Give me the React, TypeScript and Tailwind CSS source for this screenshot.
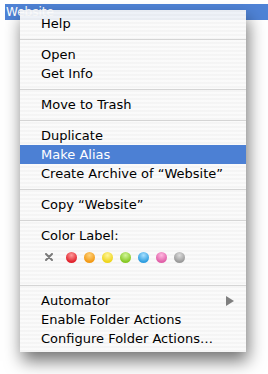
const dots = [
  'bg-[radial-gradient(circle_at_50%_30%,#ff9a9a,#e0222c_70%)]',
  'bg-[radial-gradient(circle_at_50%_30%,#ffd27a,#f29a16_70%)]',
  'bg-[radial-gradient(circle_at_50%_30%,#fff59a,#eed51c_70%)]',
  'bg-[radial-gradient(circle_at_50%_30%,#d2f59a,#86c824_70%)]',
  'bg-[radial-gradient(circle_at_50%_30%,#a8e0ff,#2f9ee0_70%)]',
  'bg-[radial-gradient(circle_at_50%_30%,#ffb8e0,#e060a8_70%)]',
  'bg-[radial-gradient(circle_at_50%_30%,#dcdcdc,#9a9a9a_70%)]',
];

function Item({ label, active, arrow }: { label: string; active?: boolean; arrow?: boolean }) {
  return (
    <div
      className={`flex h-[19px] items-center justify-between pl-[21px] pr-[12px] ${
        active ? 'bg-[#4c80d4] text-white' : 'text-black'
      }`}
    >
      <span>{label}</span>
      {arrow && (
        <svg width="8" height="10" viewBox="0 0 8 10">
          <polygon points="0,0 8,5 0,10" fill="#7f7f7f" />
        </svg>
      )}
    </div>
  );
}

function Sep() {
  return (
    <div className="flex h-[12px] items-center">
      <div className="h-px w-full bg-[#d5d5d5]" />
    </div>
  );
}

export default function App() {
  return (
    <div className="relative h-[374px] w-[268px] overflow-hidden bg-white font-['DejaVu_Sans',sans-serif] text-[13px]">
      <div className="mt-[4px] ml-[5px] flex h-[16px] items-center bg-[#4f83d6] pl-[1px] text-[12px] leading-none text-white">
        Website
      </div>

      <div className="absolute top-[10px] left-[20px] w-[226px] bg-[repeating-linear-gradient(180deg,rgba(244,244,244,0.93)_0px,rgba(244,244,244,0.93)_2px,rgba(250,250,250,0.93)_2px,rgba(250,250,250,0.93)_4px)] py-[4px] shadow-[2px_9px_16px_rgba(0,0,0,0.55)]">
        <Item label="Help" />
        <Sep />
        <Item label="Open" />
        <Item label="Get Info" />
        <Sep />
        <Item label="Move to Trash" />
        <Sep />
        <Item label="Duplicate" />
        <Item label="Make Alias" active />
        <Item label="Create Archive of “Website”" />
        <Sep />
        <Item label="Copy “Website”" />
        <Sep />
        <Item label="Color Label:" />
        <div className="flex h-[34px] items-start gap-[7px] pt-[6px] pl-[24px]">
          <span className="mr-[5px] flex h-[12px] w-[10px] items-center justify-center">
            <svg width="8" height="8" viewBox="0 0 8 8">
              <path d="M1 1 L7 7 M7 1 L1 7" stroke="#7a7a7a" strokeWidth="2" strokeLinecap="round" />
            </svg>
          </span>
          {dots.map((d) => (
            <span key={d} className={`mt-[1px] h-[11px] w-[11px] rounded-full ${d}`} />
          ))}
        </div>
        <Sep />
        <Item label="Automator" arrow />
        <Item label="Enable Folder Actions" />
        <Item label="Configure Folder Actions…" />
      </div>
    </div>
  );
}
